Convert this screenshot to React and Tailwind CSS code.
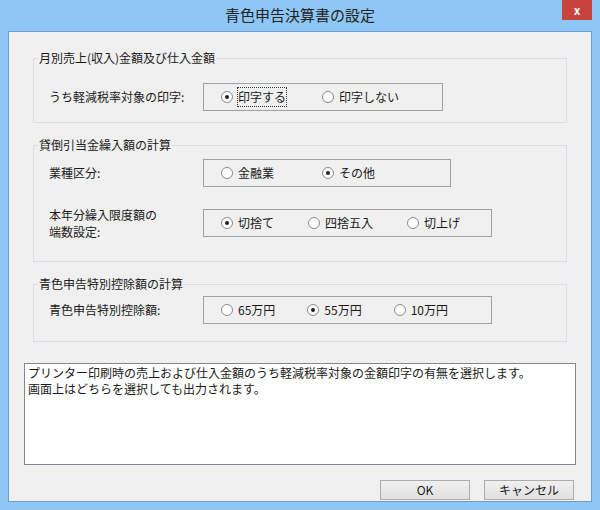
const F = { fontFamily: '"Noto Sans CJK JP", "Noto Sans", sans-serif' }

function Radio({ label, checked, focus }) {
  return (
    <span className="flex items-center gap-[5px]">
      <span className="flex h-[12px] w-[12px] items-center justify-center rounded-full border border-[#8a8a8a] bg-white">
        {checked ? <span className="h-[4px] w-[4px] rounded-full bg-[#222]" /> : null}
      </span>
      <span className={focus ? 'outline-1 outline-dotted outline-[#333]' : ''}>{label}</span>
    </span>
  )
}

function Group({ title, children, className }) {
  return (
    <div className={`relative mx-[24px] border border-[#d5dfe5] ${className}`}>
      <span className="absolute -top-[10px] left-[4px] bg-[#f0f0f0] px-[1px] leading-[18px]">{title}</span>
      {children}
    </div>
  )
}

function Box({ w, children, gap }) {
  return (
    <div className={`flex h-[28px] items-center border border-[#a0a0a0] pl-[17px] ${gap}`} style={{ width: w }}>
      {children}
    </div>
  )
}

export default function App() {
  return (
    <div className="h-[510px] w-[600px] bg-[#8ec6f5] text-[12px] text-[#1a1a1a]" style={F}>
      <div className="relative flex h-[31px] items-center justify-center text-[15px] text-[#222]">
        青色申告決算書の設定
        <div className="absolute right-[8px] top-0 flex h-[20px] w-[30px] items-center justify-center bg-[#c7443d] text-[11px] font-bold text-white">x</div>
      </div>
      <div className="mx-[8px] h-[471px] border border-[#6f9fc8] bg-[#f0f0f0] pt-[26px]">
        <Group title="月別売上(収入)金額及び仕入金額" className="h-[65px]">
          <div className="flex items-center pt-[24px] pl-[15px]">
            <span className="w-[154px]">うち軽減税率対象の印字:</span>
            <Box w={240} gap="gap-[36px]">
              <Radio label="印字する" checked focus />
              <Radio label="印字しない" />
            </Box>
          </div>
        </Group>
        <Group title="貸倒引当金繰入額の計算" className="mt-[22px] h-[117px]">
          <div className="flex items-center pt-[13px] pl-[15px]">
            <span className="w-[154px]">業種区分:</span>
            <Box w={248} gap="gap-[48px]">
              <Radio label="金融業" />
              <Radio label="その他" checked />
            </Box>
          </div>
          <div className="mt-[19px] flex items-center pl-[15px]">
            <span className="w-[154px] leading-[17px]">本年分繰入限度額の<br />端数設定:</span>
            <Box w={289} gap="gap-[34px]">
              <Radio label="切捨て" checked />
              <Radio label="四捨五入" />
              <Radio label="切上げ" />
            </Box>
          </div>
        </Group>
        <Group title="青色申告特別控除額の計算" className="mt-[22px] h-[58px]">
          <div className="flex items-center pt-[11px] pl-[15px]">
            <span className="w-[154px]">青色申告特別控除額:</span>
            <Box w={289} gap="gap-[32px]">
              <Radio label="65万円" />
              <Radio label="55万円" checked />
              <Radio label="10万円" />
            </Box>
          </div>
        </Group>
        <div className="mx-[15px] mt-[21px] h-[102px] border border-[#828790] bg-white px-[3px] pt-[1px] leading-[16px]">
          <div>プリンター印刷時の売上および仕入金額のうち軽減税率対象の金額印字の有無を選択します。</div>
          <div>画面上はどちらを選択しても出力されます。</div>
        </div>
        <div className="mr-[17px] mt-[15px] flex justify-end gap-[14px]">
          <button className="h-[20px] w-[90px] border border-[#acacac] bg-gradient-to-b from-[#f0f0f0] to-[#e0e0e0] text-[12px] leading-[18px]">OK</button>
          <button className="h-[20px] w-[90px] border border-[#acacac] bg-gradient-to-b from-[#f0f0f0] to-[#e0e0e0] text-[12px] leading-[18px]">キャンセル</button>
        </div>
      </div>
    </div>
  )
}
